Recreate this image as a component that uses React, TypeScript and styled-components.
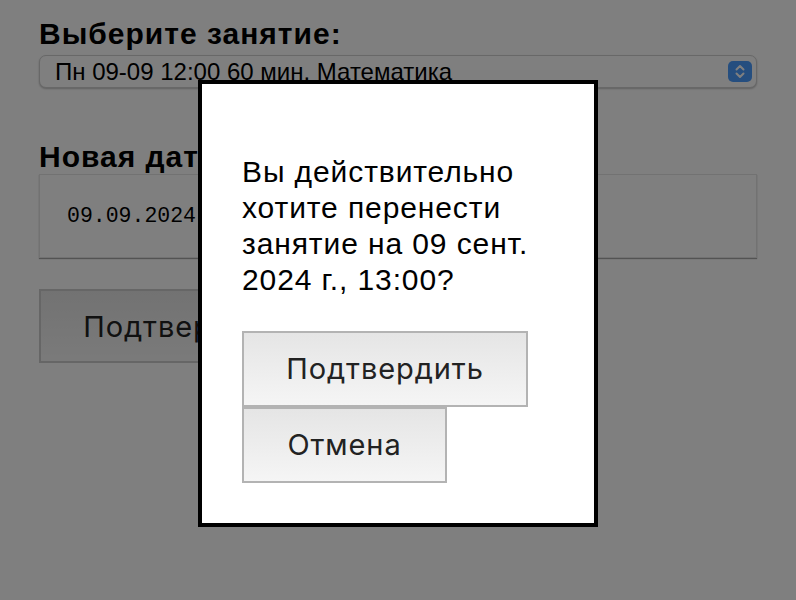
import React from "react";
import styled, { createGlobalStyle } from "styled-components";

const Global = createGlobalStyle`
  html, body { margin: 0; padding: 0; background: #ffffff; }
  body { font-family: "Liberation Sans", Arial, sans-serif; color: #000; }
  * { box-sizing: border-box; }
`;

const Page = styled.div`
  padding: 19px 39px 0 39px;
  display: flex;
  flex-direction: column;
  align-items: stretch;
`;

const Label = styled.label<{ $gap?: number }>`
  display: block;
  font-family: "Liberation Sans", Arial, sans-serif;
  font-weight: 700;
  font-size: 30px;
  line-height: 30px;
  letter-spacing: 1px;
  margin-top: ${(p) => p.$gap ?? 0}px;
`;

const SelectBox = styled.div`
  margin-top: 6px;
  height: 33px;
  display: flex;
  align-items: center;
  justify-content: space-between;
  padding: 0 4px 0 15px;
  background: #ffffff;
  border: 1px solid #d0d0d0;
  border-radius: 7px;
  box-shadow: 0 1px 2px rgba(0, 0, 0, 0.25);
  font-family: "Liberation Sans", Arial, sans-serif;
  font-size: 24px;
  color: #000;
`;

const Stepper = styled.span`
  width: 24px;
  height: 21px;
  border-radius: 5px;
  background: #4a9cff;
  display: flex;
  align-items: center;
  justify-content: center;
`;

const DateInput = styled.input`
  display: block;
  margin-top: 2px;
  width: 100%;
  height: 84px;
  padding: 0 27px;
  background: #ffffff;
  border: 1px solid #e4e4e4;
  box-shadow: 0 1px 1px rgba(0, 0, 0, 0.35);
  font-family: "Liberation Mono", "DejaVu Sans Mono", monospace;
  font-size: 21.5px;
  color: #000;
  outline: none;
`;

const Button = styled.button<{ $width: number }>`
  display: block;
  width: ${(p) => p.$width}px;
  height: 76px;
  padding: 0;
  border: 2px solid #b3b3b3;
  background: linear-gradient(#e5e5e5, #f5f5f5);
  font-family: Inter, "Liberation Sans", Arial, sans-serif;
  font-size: 29px;
  letter-spacing: 0.9px;
  color: #222;
  cursor: pointer;
`;

const PageButton = styled(Button)`
  margin-top: 31px;
  height: 74px;
  border-color: #cccccc;
`;

const Overlay = styled.div`
  position: fixed;
  inset: 0;
  background: rgba(0, 0, 0, 0.5);
  display: flex;
  align-items: center;
  justify-content: center;
  padding-top: 6px;
`;

const Modal = styled.div`
  width: 400px;
  background: #ffffff;
  border: 4px solid #000;
  padding: 40px;
  display: flex;
  flex-direction: column;
  align-items: flex-start;
`;

const Message = styled.p`
  margin: 30px 0 33px 0;
  font-family: "Liberation Sans", Arial, sans-serif;
  font-size: 30px;
  line-height: 36px;
  letter-spacing: 0.9px;
  color: #000;
`;

export default function App() {
  return (
    <>
      <Global />
      <Page>
        <Label>Выберите занятие:</Label>
        <SelectBox>
          <span>Пн 09-09 12:00 60 мин. Математика</span>
          <Stepper>
            <svg width="14" height="17" viewBox="0 0 14 17" fill="none">
              <path d="M3.5 6.5 L7 3 L10.5 6.5" stroke="#fff" strokeWidth="2" strokeLinecap="round" strokeLinejoin="round" />
              <path d="M3.5 10.5 L7 14 L10.5 10.5" stroke="#fff" strokeWidth="2" strokeLinecap="round" strokeLinejoin="round" />
            </svg>
          </Stepper>
        </SelectBox>
        <Label $gap={54}>Новая дата:</Label>
        <DateInput readOnly value="09.09.2024, 13:00" />
        <PageButton $width={286}>Подтвердить</PageButton>
      </Page>
      <Overlay>
        <Modal>
          <Message>
            Вы действительно хотите перенести занятие на 09 сент. 2024 г., 13:00?
          </Message>
          <Button $width={286}>Подтвердить</Button>
          <Button $width={205}>Отмена</Button>
        </Modal>
      </Overlay>
    </>
  );
}
